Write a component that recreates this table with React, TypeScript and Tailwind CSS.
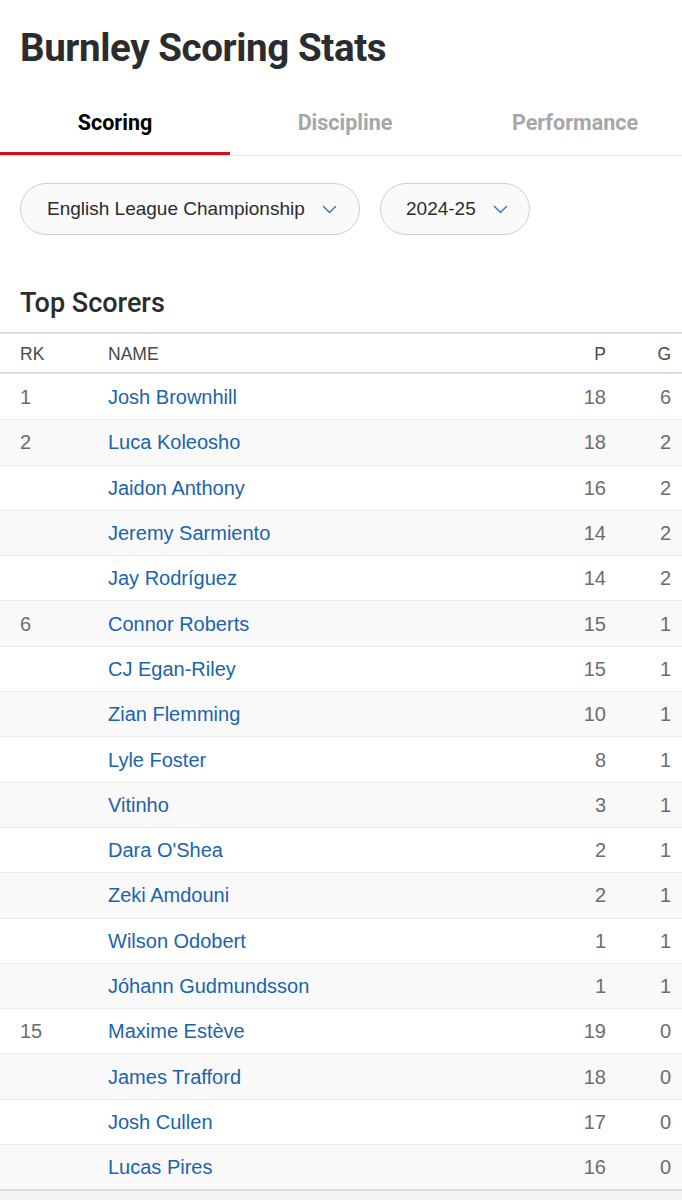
const players = [
  { rk: '1', name: 'Josh Brownhill', p: 18, g: 6 },
  { rk: '2', name: 'Luca Koleosho', p: 18, g: 2 },
  { rk: '', name: 'Jaidon Anthony', p: 16, g: 2 },
  { rk: '', name: 'Jeremy Sarmiento', p: 14, g: 2 },
  { rk: '', name: 'Jay Rodríguez', p: 14, g: 2 },
  { rk: '6', name: 'Connor Roberts', p: 15, g: 1 },
  { rk: '', name: 'CJ Egan-Riley', p: 15, g: 1 },
  { rk: '', name: 'Zian Flemming', p: 10, g: 1 },
  { rk: '', name: 'Lyle Foster', p: 8, g: 1 },
  { rk: '', name: 'Vitinho', p: 3, g: 1 },
  { rk: '', name: "Dara O'Shea", p: 2, g: 1 },
  { rk: '', name: 'Zeki Amdouni', p: 2, g: 1 },
  { rk: '', name: 'Wilson Odobert', p: 1, g: 1 },
  { rk: '', name: 'Jóhann Gudmundsson', p: 1, g: 1 },
  { rk: '15', name: 'Maxime Estève', p: 19, g: 0 },
  { rk: '', name: 'James Trafford', p: 18, g: 0 },
  { rk: '', name: 'Josh Cullen', p: 17, g: 0 },
  { rk: '', name: 'Lucas Pires', p: 16, g: 0 },
];

function Chevron() {
  return (
    <svg width="15" height="9" viewBox="0 0 15 9" fill="none" className="ml-[17px]">
      <path d="M1.5 1.5l6 6 6-6" stroke="#2f6fb5" strokeWidth="1.3" strokeLinecap="round" strokeLinejoin="round" />
    </svg>
  );
}

export default function App() {
  return (
    <div className="w-[682px] min-h-[1200px] bg-white font-['Liberation_Sans',Arial,sans-serif] text-[#2b2c2d]">
      <h1 className="pl-5 pt-[26px] h-[88px] text-[38.5px] leading-[44px] font-bold tracking-[-0.4px] font-['Roboto',sans-serif]">
        Burnley Scoring Stats
      </h1>

      {/* Tabs */}
      <div className="flex border-b border-[#e6e6e6] h-[68px]">
        <div className="relative w-[230px] flex items-center justify-center pt-1 text-[21.5px] font-bold font-['Roboto',sans-serif] text-black">
          Scoring
          <div className="absolute left-0 right-0 bottom-0 h-[3px] bg-[#d0111b]" />
        </div>
        <div className="w-[230px] flex items-center justify-center pt-1 text-[21.5px] font-bold font-['Roboto',sans-serif] text-[#a6a7a8]">
          Discipline
        </div>
        <div className="flex-1 flex items-center justify-center pt-1 pl-2 text-[21.5px] font-bold font-['Roboto',sans-serif] text-[#a6a7a8]">
          Performance
        </div>
      </div>

      {/* Filters */}
      <div className="flex gap-5 px-5 pt-[27px]">
        <div className="h-[52px] w-[340px] rounded-full border border-[#cfcfcf] bg-[#fafafa] flex items-center pl-[26px] text-[19px] text-[#2b2c2d]">
          English League Championship
          <Chevron />
        </div>
        <div className="h-[52px] w-[150px] rounded-full border border-[#cfcfcf] bg-[#fafafa] flex items-center pl-[25px] text-[19px] text-[#2b2c2d]">
          2024-25
          <Chevron />
        </div>
      </div>

      <h2 className="pl-5 pt-[52px] pb-[13px] text-[27px] leading-[32px] font-medium font-['Roboto',sans-serif] text-[#2b2c2d]">
        Top Scorers
      </h2>

      {/* Table */}
      <div className="border-t-2 border-[#dcdcdc]">
        <div className="flex items-center h-[40px] pt-[2px] border-b-2 border-[#dcdcdc] text-[17.5px] text-[#48494a]">
          <div className="w-[108px] pl-5">RK</div>
          <div className="flex-1">NAME</div>
          <div className="w-[60px] text-right">P</div>
          <div className="w-[76px] pr-[11px] text-right">G</div>
        </div>
        {players.map((pl, i) => (
          <div
            key={pl.name}
            className={`flex items-center h-[45.3px] text-[20px] ${i > 0 ? 'border-t border-[#ebebeb]' : ''} ${i % 2 === 1 ? 'bg-[#f9f9fa]' : 'bg-white'}`}
          >
            <div className="w-[108px] pl-5 text-[#6c6d6f]">{pl.rk}</div>
            <div className="flex-1 text-[#1a63b0]">{pl.name}</div>
            <div className="w-[60px] text-right text-[#6c6d6f]">{pl.p}</div>
            <div className="w-[76px] pr-[11px] text-right text-[#6c6d6f]">{pl.g}</div>
          </div>
        ))}
        <div className="border-t-2 border-[#dcdcdc] h-[20px] bg-[#f3f3f3]" />
      </div>
    </div>
  );
}
